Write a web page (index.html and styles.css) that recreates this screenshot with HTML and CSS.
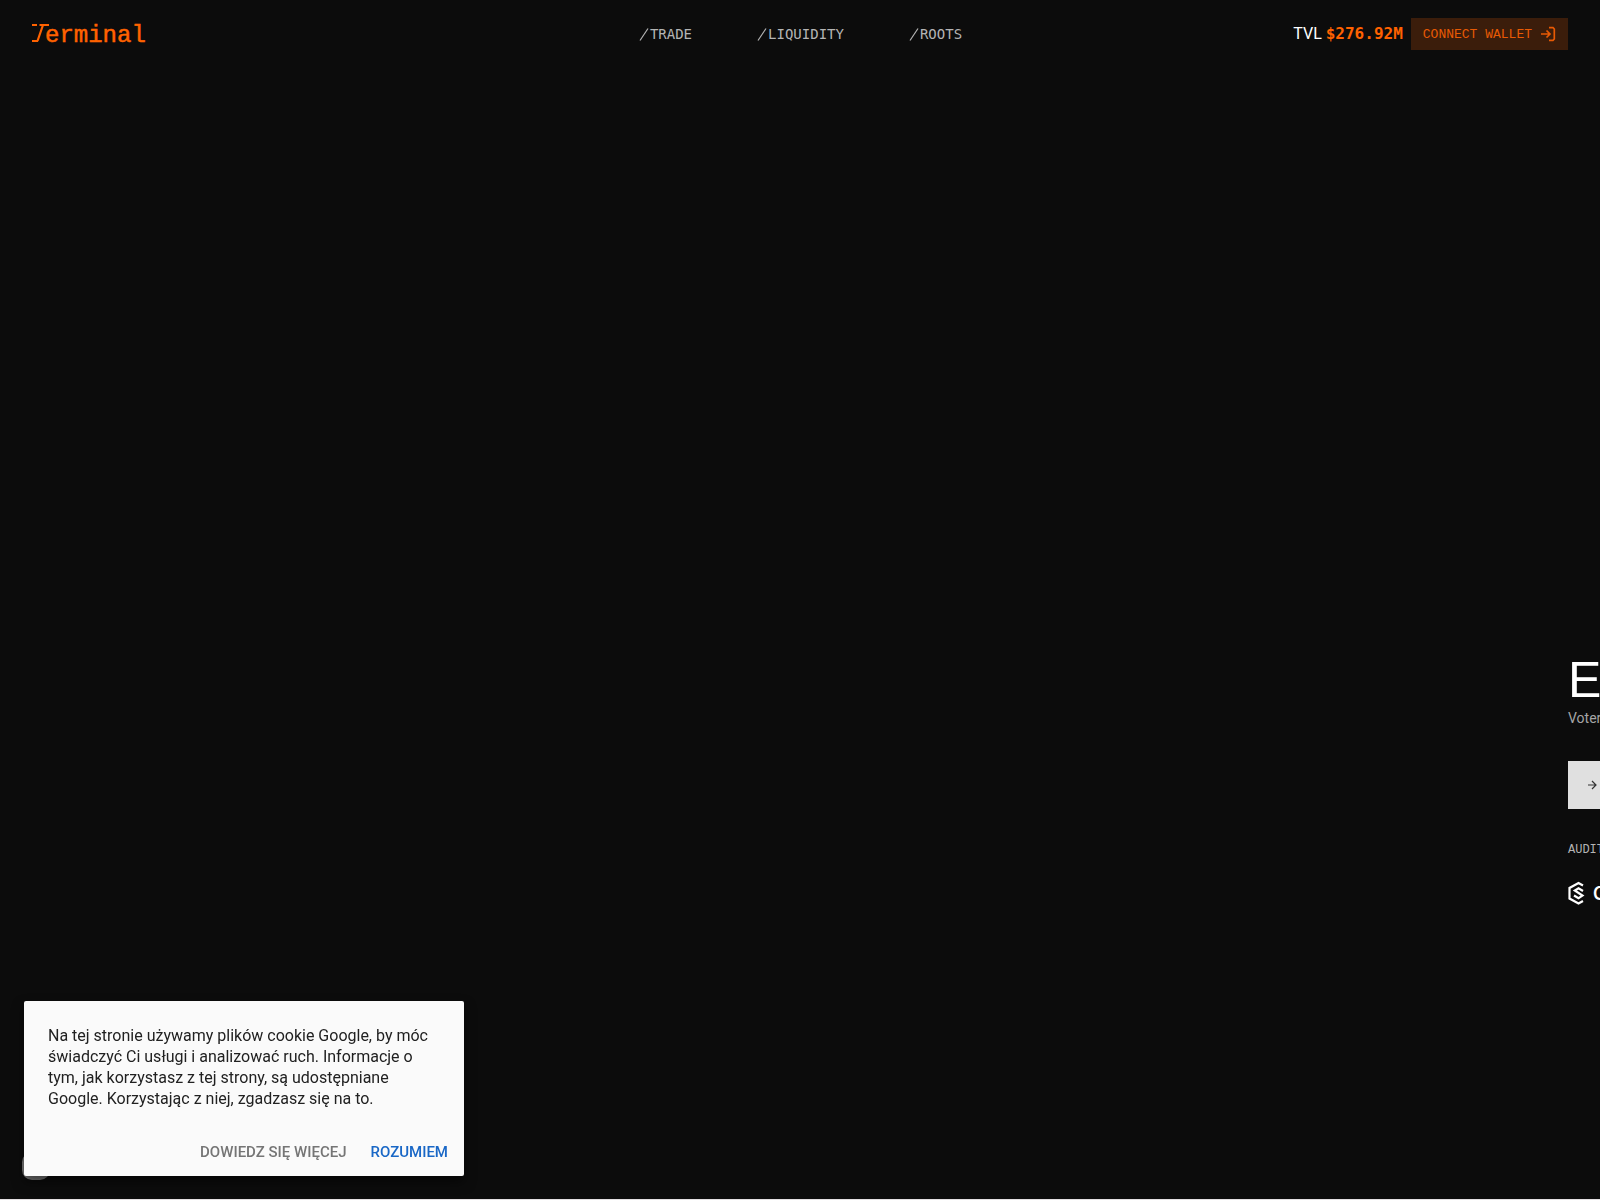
FILE: index.html
```html
<!DOCTYPE html>
<html lang="en">
<head>
<meta charset="utf-8">
<meta name="viewport" content="width=device-width, initial-scale=1">
<title>Terminal</title>
<link rel="stylesheet" href="styles.css">
</head>
<body>
<div class="page">
  <header class="header">
    <a class="logo" href="#" aria-label="Terminal">
      <svg class="logo-mark" width="18" height="19" viewBox="0 0 18 19" fill="none" stroke="currentColor" stroke-width="2.200" aria-hidden="true"><path d="M0 2H5M7.500 2H17M11 2L5.500 18M0 18H6"/></svg><span>erminal</span>
    </a>
    <nav class="nav">
      <a href="#"><svg width="12" height="14" viewBox="0 0 12 14" stroke="currentColor" stroke-width="1.200" aria-hidden="true"><path d="M2 13.500L10 1.500"/></svg>TRADE</a>
      <a href="#"><svg width="12" height="14" viewBox="0 0 12 14" stroke="currentColor" stroke-width="1.200" aria-hidden="true"><path d="M2 13.500L10 1.500"/></svg>LIQUIDITY</a>
      <a href="#"><svg width="12" height="14" viewBox="0 0 12 14" stroke="currentColor" stroke-width="1.200" aria-hidden="true"><path d="M2 13.500L10 1.500"/></svg>ROOTS</a>
    </nav>
    <div class="account">
      <p class="tvl">TVL <strong>$276.92M</strong></p>
      <button class="connect" type="button"><span>CONNECT WALLET</span>
        <svg width="16" height="16" viewBox="0 0 16 16" fill="none" stroke="currentColor" stroke-width="1.700" aria-hidden="true"><path d="M1 8H10M6.500 4.500L10 8L6.500 11.500M9 1.700H13L14.300 3V13L13 14.300H9"/></svg>
      </button>
    </div>
  </header>
  <main class="main">
    <section class="slide">
      <h1>E</h1>
      <p class="lead">Voter</p>
      <button class="enter" type="button" aria-label="Enter">
        <svg width="10" height="10" viewBox="0 0 10 10" fill="none" stroke="currentColor" aria-hidden="true"><path stroke-width="1.200" d="M0 5H8M4 1L8 5L4 9"/></svg>
      </button>
      <h2>AUDIT</h2>
      <div class="auditor">
        <svg width="17" height="24" viewBox="0 0 17 24" fill="none" stroke="currentColor" stroke-width="2.200" aria-hidden="true"><path d="M15 4.500L10.500 2L1.500 7V17.500L10.500 22.500L15 20M15 10L10.500 7.200L6.800 9.500L14.500 14.500L10.500 17.300L6 14.500"/></svg>
        <span>C</span>
      </div>
    </section>
  </main>
  <div class="dock">
    <span class="badge"></span>
    <section class="cookie" aria-label="Cookie">
      <p>Na tej stronie używamy plików cookie Google, by móc świadczyć Ci usługi i analizować ruch. Informacje o tym, jak korzystasz z tej strony, są udostępniane Google. Korzystając z niej, zgadzasz się na to.</p>
      <div class="actions">
        <a href="#">DOWIEDZ SIĘ WIĘCEJ</a>
        <button type="button">ROZUMIEM</button>
      </div>
    </section>
  </div>
</div>
</body>
</html>
```
FILE: styles.css
```css
* { box-sizing: border-box; }
body {
  margin: 0;
  background: #0c0c0c;
  color: #fff;
  font-family: Roboto, sans-serif;
}
h1, h2, p { margin: 0; font-weight: 400; }
a { color: inherit; text-decoration: none; }
button { border: 0; border-radius: 0; margin: 0; font: inherit; cursor: pointer; }
svg { display: block; flex: none; }

.page {
  display: flex;
  flex-direction: column;
  min-height: 100vh;
  overflow: hidden;
  border-bottom: 1px solid #e4e0e2;
}
.header {
  display: grid;
  grid-template-columns: 1fr auto 1fr;
  align-items: center;
  height: 68px;
  padding: 0 32px;
}
.logo {
  display: flex;
  align-items: baseline;
  padding-top: 4px;
  color: #ff6200;
  font: 24px/32px "Liberation Mono", monospace;
  -webkit-text-stroke: 0.5px currentColor;
}
.logo-mark { margin-right: -5px; }
.nav {
  display: flex;
  gap: 64px;
  color: #b4b4b4;
  font: 14px/20px "DejaVu Sans Mono", monospace;
}
.nav a { display: flex; align-items: center; }
.account {
  display: flex;
  justify-content: flex-end;
  align-items: center;
  gap: 8px;
}
.tvl { font-size: 16px; line-height: 24px; }
.tvl strong {
  color: #ff6200;
  font-family: "DejaVu Sans Mono", monospace;
}
.connect {
  display: flex;
  align-items: center;
  gap: 8px;
  height: 32px;
  padding: 0 12px;
  background: #3b1d0b;
  color: #e85a04;
  font: 13px/16px "Liberation Mono", monospace;
}
.connect span { padding-top: 2px; }
.main { flex: 1; overflow: hidden; }
.slide {
  display: flex;
  flex-direction: column;
  align-items: flex-start;
  margin-left: calc(100% - 32px);
  padding-top: 584px;
}
.slide h1 { font: 50px/56px "Liberation Sans", sans-serif; }
.lead {
  color: #a5a5a5;
  font-size: 14px;
  line-height: 20px;
}
.enter {
  width: 128px;
  height: 48px;
  margin-top: 33px;
  padding: 0 20px;
  background: #e0e0e0;
  color: #333;
}
.slide h2 {
  margin-top: 33px;
  color: #b4b4b4;
  font: 12px/16px "Liberation Mono", monospace;
}
.auditor {
  display: flex;
  align-items: center;
  gap: 8px;
  margin-top: 23px;
  font: 600 18px/24px Inter, sans-serif;
}
.auditor span { padding-top: 2px; }
.auditor { height: 24px; }
.dock {
  position: fixed;
  left: 24px;
  bottom: 24px;
  width: 440px;
}
.badge {
  position: absolute;
  left: -2px;
  bottom: -4px;
  width: 28px;
  height: 28px;
  border-radius: 10px;
  background: #777;
}
.cookie {
  position: relative;
  padding: 24px 8px 8px 24px;
  border-radius: 2px;
  background: #fafafa;
  box-shadow: 0 6px 12px rgba(0, 0, 0, 0.5);
  color: #212121;
}
.cookie p {
  padding-right: 16px;
  font-size: 16px;
  line-height: 21px;
}
.actions {
  display: flex;
  justify-content: flex-end;
  gap: 8px;
  margin-top: 27px;
  font-size: 15px;
  font-weight: 500;
  line-height: 32px;
}
.actions a { padding: 0 8px; color: #757575; }
.actions button { padding: 0 8px; background: none; color: #1967c6; }
```
